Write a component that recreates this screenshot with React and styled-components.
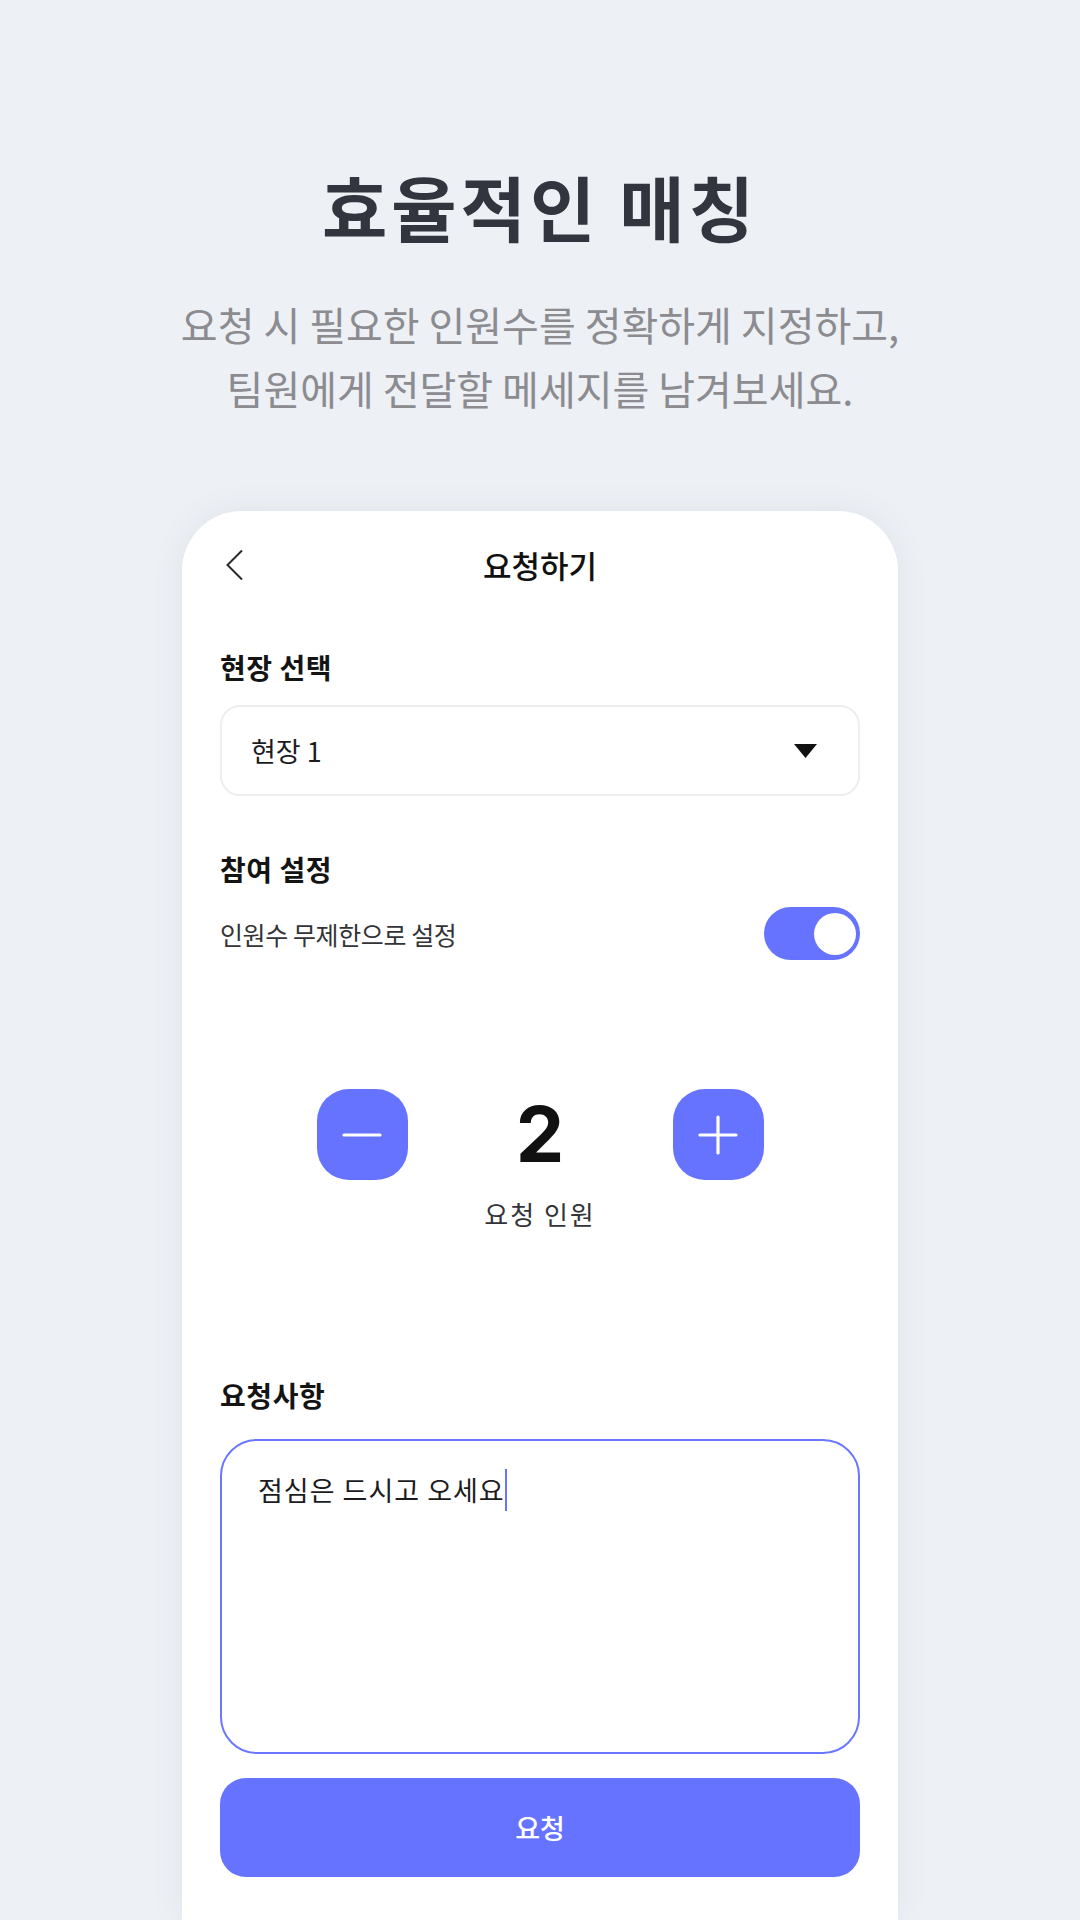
import React from 'react';
import styled, { createGlobalStyle } from 'styled-components';

const GlobalStyle = createGlobalStyle`
    * {
        box-sizing: border-box;
    }
    body {
        margin: 0;
        background: #edf0f5;
        font-family: 'Noto Sans CJK KR', 'Noto Sans', sans-serif;
        color: #1c1c1e;
    }
`;

const Page = styled.div`
    height: 100vh;
    overflow: hidden;
    display: flex;
    flex-direction: column;
    align-items: center;
    background: #edf0f5;
`;

const Hero = styled.header`
    padding-top: 160px;
    text-align: center;
`;

const HeroTitle = styled.h1`
    margin: 0;
    font-size: 71px;
    line-height: 90px;
    font-weight: 700;
    letter-spacing: 4px;
    color: #32343e;
`;

const HeroText = styled.p`
    margin: 42px 0 0;
    font-size: 40px;
    line-height: 64px;
    font-weight: 400;
    letter-spacing: 0;
    color: #8b8b90;
`;

const Phone = styled.main`
    flex: 1;
    width: 716px;
    margin-top: 91px;
    padding: 24px 38px 0;
    background: #ffffff;
    border-radius: 60px 60px 0 0;
    box-shadow: 0 0 36px rgba(40, 50, 90, 0.06);
    display: flex;
    flex-direction: column;
`;

const TopBar = styled.div`
    display: grid;
    grid-template-columns: 1fr auto 1fr;
    align-items: center;
    height: 60px;
`;

const BackButton = styled.button`
    justify-self: start;
    display: flex;
    padding: 0 0 0 5px;
    border: none;
    background: transparent;
    cursor: pointer;
`;

const ScreenTitle = styled.h2`
    margin: 0;
    font-size: 31px;
    line-height: 40px;
    font-weight: 500;
    letter-spacing: 0;
    color: #111111;
`;

const Label = styled.h3`
    margin: ${(p) => p.$top}px 0 0;
    font-size: 28px;
    line-height: 36px;
    font-weight: 700;
    letter-spacing: ${(p) => p.$spacing ?? 0.5}px;
    color: #141414;
`;

const Select = styled.div`
    margin-top: 20px;
    height: 91px;
    padding: 0 41px 0 29px;
    display: flex;
    align-items: center;
    justify-content: space-between;
    border: 2px solid #eceef1;
    border-radius: 20px;
    font-size: 27px;
    color: #1c1c1e;
`;

const SettingRow = styled.div`
    margin-top: 20px;
    height: 53px;
    display: flex;
    align-items: center;
    justify-content: space-between;
`;

const SettingText = styled.span`
    font-size: 25px;
    letter-spacing: -0.4px;
    color: #333338;
`;

const Switch = styled.button`
    position: relative;
    width: 96px;
    height: 53px;
    border: none;
    border-radius: 27px;
    background: ${(p) => (p.$on ? '#6673ff' : '#d4d6dc')};
    cursor: pointer;

    &::after {
        content: '';
        position: absolute;
        top: 6px;
        ${(p) => (p.$on ? 'right: 4px;' : 'left: 4px;')}
        width: 42px;
        height: 42px;
        border-radius: 50%;
        background: #ffffff;
    }
`;

const Counter = styled.div`
    margin-top: 129px;
    display: flex;
    flex-direction: column;
    align-items: center;
`;

const CounterRow = styled.div`
    display: grid;
    grid-template-columns: 91px 265px 91px;
    align-items: center;
`;

const StepButton = styled.button`
    width: 91px;
    height: 91px;
    border: none;
    border-radius: 32px;
    background: #6673ff;
    display: flex;
    align-items: center;
    justify-content: center;
    cursor: pointer;
`;

const Count = styled.span`
    text-align: center;
    font-family: 'Inter', 'Noto Sans', sans-serif;
    font-size: 77px;
    line-height: 91px;
    font-weight: 700;
    color: #111111;
`;

const CountCaption = styled.span`
    margin-top: 17px;
    font-size: 26px;
    line-height: 34px;
    letter-spacing: 2px;
    color: #333338;
`;

const Memo = styled.div`
    margin-top: 26px;
    height: 315px;
    padding: 28px 34px 28px 36px;
    border: 2px solid #6b77ff;
    border-radius: 37px;
    font-size: 27px;
    line-height: 42px;
    letter-spacing: 1px;
    color: #1c1c1e;
`;

const Caret = styled.span`
    display: inline-block;
    width: 2px;
    height: 42px;
    vertical-align: top;
    background: #6673ff;
`;

const SubmitButton = styled.button`
    margin-top: 24px;
    height: 99px;
    border: none;
    border-radius: 26px;
    background: #6673ff;
    color: #ffffff;
    font-family: inherit;
    font-size: 27px;
    font-weight: 500;
    letter-spacing: 0;
    cursor: pointer;
`;

const ChevronLeft = () => (
    <svg width="20" height="32" viewBox="0 0 20 32" fill="none">
        <path d="M17 1.5 L2.5 16 L17 30.5" stroke="#2a2a2e" strokeWidth="2" />
    </svg>
);

const CaretDown = () => (
    <svg width="23" height="14" viewBox="0 0 23 14">
        <path d="M0 0 H23 L11.5 14 Z" fill="#111111" />
    </svg>
);

const Minus = () => (
    <svg width="40" height="40" viewBox="0 0 40 40">
        <path d="M2 20 H38" stroke="#ffffff" strokeWidth="3.2" strokeLinecap="round" />
    </svg>
);

const Plus = () => (
    <svg width="40" height="40" viewBox="0 0 40 40">
        <path d="M2 20 H38 M20 2 V38" stroke="#ffffff" strokeWidth="3.2" strokeLinecap="round" />
    </svg>
);

const App = () => {
    return (
        <Page>
            <GlobalStyle />
            <Hero>
                <HeroTitle>효율적인 매칭</HeroTitle>
                <HeroText>
                    요청 시 필요한 인원수를 정확하게 지정하고,
                    <br />
                    팀원에게 전달할 메세지를 남겨보세요.
                </HeroText>
            </Hero>
            <Phone>
                <TopBar>
                    <BackButton aria-label="뒤로">
                        <ChevronLeft />
                    </BackButton>
                    <ScreenTitle>요청하기</ScreenTitle>
                </TopBar>

                <Label $top={54}>현장 선택</Label>
                <Select>
                    <span>현장 1</span>
                    <CaretDown />
                </Select>

                <Label $top={55}>참여 설정</Label>
                <SettingRow>
                    <SettingText>인원수 무제한으로 설정</SettingText>
                    <Switch $on aria-label="인원수 무제한" />
                </SettingRow>

                <Counter>
                    <CounterRow>
                        <StepButton aria-label="감소">
                            <Minus />
                        </StepButton>
                        <Count>2</Count>
                        <StepButton aria-label="증가">
                            <Plus />
                        </StepButton>
                    </CounterRow>
                    <CountCaption>요청 인원</CountCaption>
                </Counter>

                <Label $top={146} $spacing={0.6}>요청사항</Label>
                <Memo>
                    점심은 드시고 오세요
                    <Caret />
                </Memo>
                <SubmitButton>요청</SubmitButton>
            </Phone>
        </Page>
    );
};

export default App;
